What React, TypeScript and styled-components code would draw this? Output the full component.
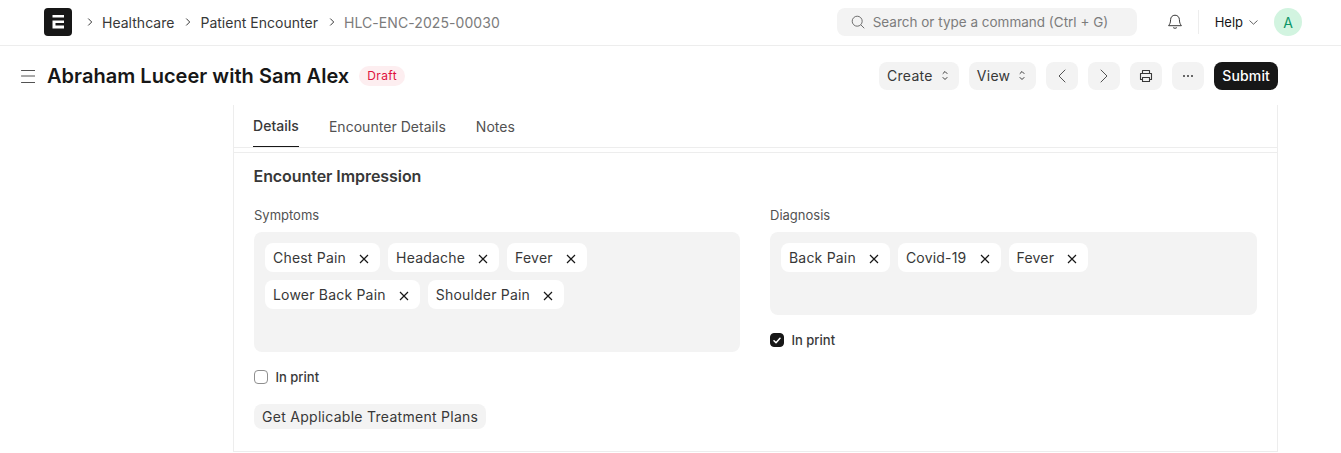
import { createGlobalStyle } from "styled-components";
import styled from "styled-components";

const GlobalStyle = createGlobalStyle`
  html, body {
    margin: 0;
    padding: 0;
    background: #fff;
    font-family: Inter, "Liberation Sans", sans-serif;
    color: #383838;
    overflow: hidden;
  }
`

const Navbar = styled.header`
  align-items: center;
  border-bottom: 1px solid #ededed;
  box-sizing: border-box;
  display: flex;
  height: 46px;
  padding: 0 39px 1px 44px;
`
const Logo = styled.div`
  align-items: center;
  background: #171717;
  border-radius: 4px;
  display: flex;
  height: 28px;
  justify-content: center;
  width: 28px;
`
const Breadcrumbs = styled.nav`
  align-items: center;
  display: flex;
  flex: 1;
  font-size: 14px;
  gap: 9px;
  margin-left: 15px;
  letter-spacing: 0.02px;
`
const Crumb = styled.span<{ $muted?: boolean }>`
  color: ${(p) => (p.$muted ? "#7c7c7c" : "#383838")};
  letter-spacing: ${(p) => (p.$muted ? "0.07px" : "0.02px")};
  margin-right: 2px;
`
const Search = styled.div`
  align-items: center;
  background: #f3f3f3;
  border-radius: 8px;
  box-sizing: border-box;
  color: #7c7c7c;
  display: flex;
  font-size: 13.5px;
  gap: 8px;
  height: 28px;
  padding-left: 14px;
  width: 300px;
`
const NavRight = styled.div`
  align-items: center;
  display: flex;
  margin-left: 30px;
`
const NavDivider = styled.div`
  background: #ededed;
  height: 24px;
  margin: 0 16px 0 15px;
  width: 1px;
`
const HelpLink = styled.span`
  align-items: center;
  color: #171717;
  display: flex;
  font-size: 13px;
  gap: 6px;
  margin-right: 16px;
`
const Avatar = styled.div`
  align-items: center;
  background: #d2f4e0;
  border-radius: 50%;
  color: #0d9668;
  display: flex;
  font-size: 14px;
  height: 28px;
  justify-content: center;
  width: 28px;
`
const PageHead = styled.div`
  align-items: center;
  display: flex;
  height: 59px;
  padding: 0 63px 0 21px;
`
const Title = styled.h1`
  color: #171717;
  font-size: 20px;
  font-weight: 600;
  letter-spacing: 0.03px;
  line-height: 28px;
  margin: 0 10px 0 12px;
`
const Badge = styled.span`
  background: #fdeef0;
  border-radius: 10px;
  color: #e0103f;
  font-size: 12px;
  letter-spacing: 0.4px;
  line-height: 20px;
  padding: 0 8px 0 8px;
  width: 30px;
`
const Actions = styled.div`
  align-items: center;
  display: flex;
  gap: 10px;
  margin-left: auto;
`
const ActionButton = styled.button<{ $dark?: boolean; $icon?: boolean; $menu?: boolean }>`
  align-items: center;
  background: ${(p) => (p.$dark ? "#171717" : "#f3f3f3")};
  border: none;
  border-radius: 8px;
  color: ${(p) => (p.$dark ? "#fff" : "#383838")};
  display: flex;
  font-family: inherit;
  font-size: 14px;
  font-weight: ${(p) => (p.$dark ? 500 : 400)};
  gap: 9px;
  height: 28px;
  justify-content: center;
  letter-spacing: ${(p) => (p.$dark ? "0.14px" : "0.28px")};
  padding: ${(p) => (p.$icon ? "0" : p.$menu ? "0 11px 0 8px" : "0 8px")};
  width: ${(p) => (p.$icon ? "32px" : "auto")};
`
const Main = styled.main`
  border-left: 1px solid #ededed;
  border-right: 1px solid #ededed;
  box-sizing: border-box;
  margin-left: 233px;
  width: 1045px;
`
const Tabs = styled.div`
  border-bottom: 1px solid #ededed;
  box-sizing: border-box;
  display: flex;
  gap: 30px;
  height: 43px;
  letter-spacing: 0.03px;
  padding-left: 19px;
`
const Tab = styled.div<{ $active?: boolean }>`
  border-bottom: 1px solid ${(p) => (p.$active ? "#171717" : "transparent")};
  box-sizing: border-box;
  color: ${(p) => (p.$active ? "#383838" : "#525252")};
  font-size: 14px;
  font-weight: ${(p) => (p.$active ? 500 : 400)};
  height: 42px;
  line-height: ${(p) => (p.$active ? "41px" : "43px")};
`
const Section = styled.section`
  border-bottom: 1px solid #ededed;
  border-top: 1px solid #ededed;
  box-sizing: border-box;
  height: 300px;
  margin-top: 4px;
  padding: 13px 20px 0 20px;
`
const SectionTitle = styled.h2`
  color: #383838;
  font-size: 16px;
  font-weight: 600;
  letter-spacing: -0.06px;
  line-height: 20px;
  margin: 0 0 21px -0.5px;
`
const Columns = styled.div`
  display: grid;
  gap: 30px;
  grid-template-columns: 486px 487px;
`
const Column = styled.div`
  display: flex;
  flex-direction: column;
  align-items: flex-start;
`
const FieldLabel = styled.label`
  color: #525252;
  font-size: 13px;
  line-height: 16px;
  margin-bottom: 9px;
`
const TagBox = styled.div<{ $rows: number }>`
  align-content: flex-start;
  background: #f3f3f3;
  border-radius: 8px;
  box-sizing: border-box;
  display: flex;
  flex-wrap: wrap;
  gap: 8px;
  height: ${(p) => (p.$rows === 2 ? "120px" : "83px")};
  padding: 11px 11px;
  width: 100%;
`
const Tag = styled.div`
  align-items: center;
  background: #fff;
  border-radius: 8px;
  color: #383838;
  display: flex;
  font-size: 14px;
  gap: 13px;
  height: 29px;
  letter-spacing: 0.2px;
  padding: 0 11px 0 8px;
`
const CheckRow = styled.div`
  align-items: center;
  box-sizing: border-box;
  color: #383838;
  display: flex;
  font-size: 13px;
  font-weight: 500;
  gap: 7.5px;
  height: 16px;
  margin-top: 17px;
`
const CheckBox = styled.span<{ $checked?: boolean }>`
  align-items: center;
  background: ${(p) => (p.$checked ? "#171717" : "#fff")};
  border: 1px solid ${(p) => (p.$checked ? "#171717" : "#8f8f8f")};
  border-radius: 4px;
  box-sizing: border-box;
  display: flex;
  height: 14px;
  justify-content: center;
  width: 14px;
`
const PlainButton = styled.button`
  background: #f3f3f3;
  border: none;
  border-radius: 8px;
  color: #383838;
  font-family: inherit;
  font-size: 14px;
  height: 25px;
  letter-spacing: 0.28px;
  margin-top: 19px;
  padding: 0 8px;
`

const Cross = () => (
  <svg width="10" height="10" viewBox="0 0 10 10" fill="none" stroke="#171717" strokeWidth="1.2" style={{ marginTop: 2 }}>
    <path d="M1 1l8 8M9 1L1 9" />
  </svg>
)
const Chevron = ({ dir }: { dir: "left" | "right" }) => (
  <svg width="8" height="14" viewBox="0 0 8 14" fill="none" stroke="#525252" strokeWidth="1" strokeLinecap="round" strokeLinejoin="round">
    <path d={dir === "right" ? "M1 1l6 6-6 6" : "M7 1L1 7l6 6"} />
  </svg>
)
const UpDown = () => (
  <svg width="6" height="11" viewBox="0 0 6 11" fill="none" stroke="#383838" strokeWidth="1" strokeLinecap="round" strokeLinejoin="round">
    <path d="M1 3.5L3 1.5l2 2M1 7.5l2 2 2-2" />
  </svg>
)

const App = () => {
  const crumbArrow = (
    <svg width="6" height="8" viewBox="0 0 6 8" fill="none" stroke="#383838" strokeWidth="1" strokeLinecap="round" strokeLinejoin="round">
      <path d="M1.5 .8L4.7 4 1.5 7.2" />
    </svg>
  )
  return (
    <>
      <GlobalStyle />
      <Navbar>
        <Logo>
          <svg width="14" height="16" viewBox="0 0 14 16" fill="#fff">
            <path d="M1.500 1h11.500v2.400H1.500zM1.500 6.500H13v2.400H4.500v2.700H13v2.900H1.500z" />
          </svg>
        </Logo>
        <Breadcrumbs>
          {crumbArrow}
          <Crumb>Healthcare</Crumb>
          {crumbArrow}
          <Crumb>Patient Encounter</Crumb>
          {crumbArrow}
          <Crumb $muted>HLC-ENC-2025-00030</Crumb>
        </Breadcrumbs>
        <Search>
          <svg width="14" height="14" viewBox="0 0 14 14" fill="none" stroke="#6f6f6f" strokeWidth="1">
            <circle cx="6.200" cy="6.200" r="5" />
            <path d="M10 10l3 3" strokeLinecap="round" />
          </svg>
          Search or type a command (Ctrl + G)
        </Search>
        <NavRight>
          <svg width="16" height="16" viewBox="0 0 16 16" fill="none" stroke="#383838" strokeWidth="1" strokeLinejoin="round">
            <path d="M8 1.200c-2.700 0-4.400 2-4.400 4.500 0 3.400-1.300 5-2 6h12.800c-.7-1-2-2.600-2-6 0-2.500-1.700-4.500-4.400-4.500z" />
            <path d="M6.300 13.800c.4.700 3 .7 3.400 0" strokeLinecap="round" />
          </svg>
          <NavDivider />
          <HelpLink>
            Help
            <svg width="9" height="5" viewBox="0 0 9 5" fill="none" stroke="#525252" strokeWidth="0.9" strokeLinecap="round" strokeLinejoin="round">
              <path d="M.8.8l3.700 3.400L8.200.8" />
            </svg>
          </HelpLink>
          <Avatar>A</Avatar>
        </NavRight>
      </Navbar>

      <PageHead>
        <svg width="14" height="14" viewBox="0 0 14 14" fill="none" stroke="#525252" strokeWidth="1" strokeLinecap="round">
          <path d="M.5 1.500h13.500M.5 7h13.500M.5 13.500h13.500" />
        </svg>
        <Title>Abraham Luceer with Sam Alex</Title>
        <Badge>Draft</Badge>
        <Actions>
          <ActionButton $menu>Create <UpDown /></ActionButton>
          <ActionButton $menu>View <UpDown /></ActionButton>
          <ActionButton $icon><Chevron dir="left" /></ActionButton>
          <ActionButton $icon><Chevron dir="right" /></ActionButton>
          <ActionButton $icon>
            <svg width="14" height="14" viewBox="0 0 14 14" fill="none" stroke="#383838" strokeWidth="1.100" strokeLinejoin="round">
              <path d="M3.500 4.500V1.500h7v3M3.500 10.500H1.500V4.500h11v6h-2" />
              <path d="M3.500 8.500h7v4h-7z" />
            </svg>
          </ActionButton>
          <ActionButton $icon>
            <svg width="12" height="4" viewBox="0 0 12 4" fill="#383838">
              <circle cx="2" cy="2" r="1" /><circle cx="6" cy="2" r="1" /><circle cx="10" cy="2" r="1" />
            </svg>
          </ActionButton>
          <ActionButton $dark>Submit</ActionButton>
        </Actions>
      </PageHead>

      <Main>
        <Tabs>
          <Tab $active>Details</Tab>
          <Tab>Encounter Details</Tab>
          <Tab>Notes</Tab>
        </Tabs>
        <Section>
          <SectionTitle>Encounter Impression</SectionTitle>
          <Columns>
            <Column>
              <FieldLabel>Symptoms</FieldLabel>
              <TagBox $rows={2}>
                {["Chest Pain", "Headache", "Fever", "Lower Back Pain", "Shoulder Pain"].map((t) => (
                  <Tag key={t}>{t}<Cross /></Tag>
                ))}
              </TagBox>
              <CheckRow><CheckBox />In print</CheckRow>
              <PlainButton>Get Applicable Treatment Plans</PlainButton>
            </Column>
            <Column>
              <FieldLabel>Diagnosis</FieldLabel>
              <TagBox $rows={1}>
                {["Back Pain", "Covid-19", "Fever"].map((t) => (
                  <Tag key={t}>{t}<Cross /></Tag>
                ))}
              </TagBox>
              <CheckRow>
                <CheckBox $checked>
                  <svg width="8" height="7" viewBox="0 0 8 7" fill="none" stroke="#fff" strokeWidth="1.500" strokeLinecap="round" strokeLinejoin="round">
                    <path d="M1 3.800l2 2 4-4.500" />
                  </svg>
                </CheckBox>
                In print
              </CheckRow>
            </Column>
          </Columns>
        </Section>
      </Main>
    </>
  )
}
export default App
